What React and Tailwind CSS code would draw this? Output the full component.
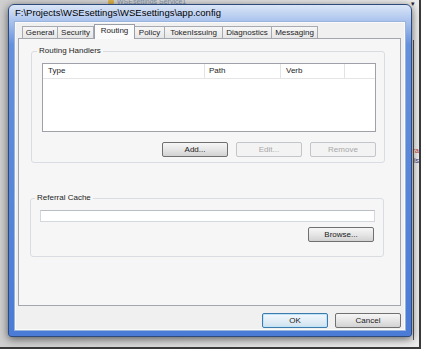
import React from "react";

const tabs = [
  { label: "General", w: "w-[36px]" },
  { label: "Security", w: "w-[37px]" },
  { label: "Routing", w: "w-[41px]", active: true },
  { label: "Policy", w: "w-[31px]" },
  { label: "TokenIssuing", w: "w-[59px]" },
  { label: "Diagnostics", w: "w-[50px]" },
  { label: "Messaging", w: "w-[47px]" },
];

function Btn({ children, disabled, primary, className = "" }) {
  let look =
    "border-[#707070] bg-linear-to-b from-[#f6f6f6] via-[#e6e6e6] via-50% to-[#d2d2d2] text-[#1b1b1b]";
  if (disabled) look = "border-[#c2c5c9] bg-[#f3f3f3] text-[#a8a8a8]";
  if (primary)
    look =
      "border-[#3d7bad] bg-linear-to-b from-[#f2f8fc] via-[#e2eef7] via-50% to-[#cfe2ef] text-[#1b1b1b] shadow-[inset_0_0_0_1px_#bfe3f7]";
  return (
    <div
      className={`flex h-[15px] w-[66px] items-center justify-center rounded-[2px] border text-[8px] leading-none ${look} ${className}`}
    >
      {children}
    </div>
  );
}

export default function App() {
  return (
    <div className="h-[353px] w-[426px] overflow-hidden bg-white font-['Liberation_Sans',sans-serif] text-[#1e1e1e]">
      {/* screenshot area */}
      <div className="relative h-[349px] w-[421px] border-r-2 border-b-2 border-[#3a3a3a] bg-linear-to-r from-[#cfcfcf] to-[#ececec] pt-[4px] pl-[8px]">
        {/* background window bits */}
        <div className="absolute top-[-2px] left-[108px] flex items-center gap-[3px] text-[7px] leading-[7px] text-[#8092ab]">
          <span className="h-[6px] w-[6px] rounded-full bg-[#e0b34a]" />
          WSEsettings Service1
        </div>
        <div className="absolute top-0 right-[4px] text-[7px] leading-none text-[#222]">▾</div>
        <div className="absolute top-[40px] right-[5px] h-[300px] w-[1px] bg-[#555]" />
        <div className="absolute top-[146px] right-0 text-[7px] leading-[9px] text-[#b33]">ra</div>
        <div className="absolute top-[156px] right-0 text-[7px] leading-[9px] text-[#337]">ls</div>

        {/* dialog */}
        <div className="relative flex h-[333px] w-[404px] flex-col rounded-t-[6px] rounded-b-[3px] border border-[#2c4a7c] bg-linear-to-b from-[#dbe6f7] via-[#6590dc] via-[12%] to-[#4a7bd6] shadow-[0_2px_8px_rgba(0,0,0,0.6)]">
          <div className="flex h-[16px] items-center pl-[6px] text-[9.5px] leading-none text-black">
            F:\Projects\WSEsettings\WSEsettings\app.config
          </div>
          <div className="mx-[5px] flex flex-1 flex-col border border-[#9bb4dc] bg-[#f0f0f0] shadow-[inset_0_0_0_1px_#fafafa]">
            {/* tabs */}
            <div className="flex h-[16px] items-end pl-[7px]">
              {tabs.map((t) =>
                t.active ? (
                  <div
                    key={t.label}
                    className={`relative z-10 -mb-px flex h-[15px] items-center justify-center border border-b-0 border-[#9a9ea6] bg-[#fbfbfb] pb-[2px] text-[8px] leading-none ${t.w}`}
                  >
                    {t.label}
                  </div>
                ) : (
                  <div
                    key={t.label}
                    className={`-ml-px flex h-[12px] items-center justify-center border border-b-0 border-[#a7abb1] bg-linear-to-b from-[#f7f7f7] to-[#e6e6e6] text-[8px] leading-none first:ml-0 ${t.w}`}
                  >
                    {t.label}
                  </div>
                )
              )}
            </div>

            {/* tab pane */}
            <div className="ml-[3px] mr-[4px] flex h-[268px] flex-col border border-[#a3a7ad] bg-[#f6f6f6] pl-[12px]">
              <fieldset className="mt-[7px] h-[117px] w-[354px] rounded-[3px] border border-[#d9dde2] pl-[10px]">
                <legend className="ml-[-5px] px-[2px] text-[8px] leading-[10px]">Routing Handlers</legend>
                <div className="mt-[7px] h-[69px] w-[334px] border border-[#9ea2a8] bg-white">
                  <div className="flex h-[15px] border-b border-[#e5e5e5] text-[8px] leading-none">
                    <div className="flex w-[162px] items-center border-r border-[#e3e3e3] pl-[5px]">Type</div>
                    <div className="flex w-[76px] items-center border-r border-[#e3e3e3] pl-[4px]">Path</div>
                    <div className="flex w-[64px] items-center border-r border-[#e3e3e3] pl-[5px]">Verb</div>
                    <div className="flex-1" />
                  </div>
                </div>
                <div className="mt-[10px] flex justify-end gap-[8px] pr-[8px]">
                  <Btn>Add...</Btn>
                  <Btn disabled>Edit...</Btn>
                  <Btn disabled>Remove</Btn>
                </div>
              </fieldset>

              <fieldset className="mt-[30px] -ml-px h-[64px] w-[354px] rounded-[3px] border border-[#d9dde2] pl-[9px]">
                <legend className="ml-[-5px] px-[2px] text-[8px] leading-[10px]">Referral Cache</legend>
                <div className="mt-[7px] h-[12px] w-[335px] border border-[#d3d8de] border-t-[#b9bec5] bg-white" />
                <div className="mt-[5px] flex w-[335px] justify-end pr-[1px]">
                  <Btn>Browse...</Btn>
                </div>
              </fieldset>
            </div>

            {/* dialog buttons */}
            <div className="mt-[7px] flex justify-end gap-[7px] pr-[4px]">
              <Btn primary className="h-[14px]">OK</Btn>
              <Btn className="h-[14px] w-[65px]">Cancel</Btn>
            </div>
          </div>
          <div className="h-[5px]" />
        </div>
      </div>
    </div>
  );
}
